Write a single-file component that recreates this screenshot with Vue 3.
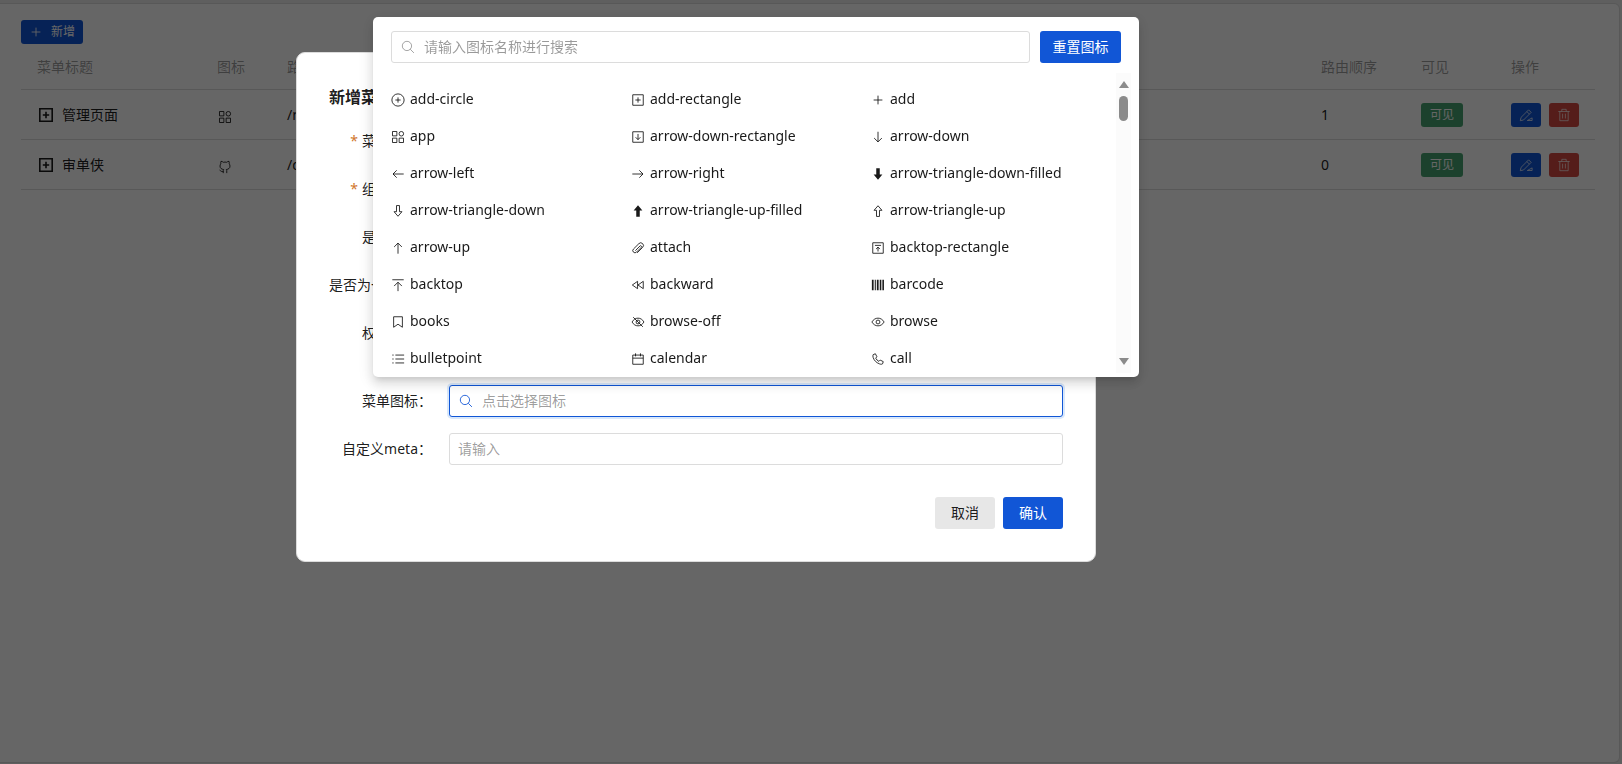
<script setup>
import { ref } from 'vue'

const keyword = ref('')
const menuIcon = ref('')
const meta = ref('')

const rows = [
  { title: '管理页面', icon: 'app', path: '/m', order: 1 },
  { title: '审单侠', icon: 'github', path: '/d', order: 0 },
]

const coveredFields = [
  { id: 'f-title', label: '菜单标题', required: true },
  { id: 'f-component', label: '组件名称', required: true },
  { id: 'f-visible', label: '是否可见' },
  { id: 'f-single', label: '是否为一级菜单' },
  { id: 'f-auth', label: '权限标识', tips: true },
]

const box = 'M2 2h12v12H2z'
const icons = {
  'add-circle': { d: 'M8 1a7 7 0 1 0 0 14A7 7 0 0 0 8 1zM8 5v6M5 8h6' },
  'add-rectangle': { d: box + 'M8 5v6M5 8h6' },
  add: { d: 'M8 3v10M3 8h10' },
  app: { d: 'M1.700 1.700h5v5h-5zM1.700 9.300h5v5h-5zM9.300 9.300h5v5h-5zM11.800 1.700a2.600 2.600 0 1 0 0 5.200a2.600 2.600 0 0 0 0-5.200z' },
  'arrow-down-rectangle': { d: box + 'M8 4.500v6.500M5.300 8.300L8 11l2.700-2.700' },
  'arrow-down': { d: 'M8 2v11.500M3.600 9.200L8 13.600l4.400-4.400' },
  'arrow-left': { d: 'M14.500 8H2.300M6.500 3.800L2.300 8l4.200 4.200' },
  'arrow-right': { d: 'M1.500 8h12.200M9.500 3.800L13.700 8l-4.200 4.200' },
  'arrow-triangle-down-filled': { d: 'M6 1.500h4v7h3L8 14.500L3 8.500h3z', fill: true },
  'arrow-triangle-down': { d: 'M6.300 1.800h3.400v7h2.800L8 14L3.500 8.800h2.800z' },
  'arrow-triangle-up-filled': { d: 'M6 14.500h4v-7h3L8 1.500L3 7.500h3z', fill: true },
  'arrow-triangle-up': { d: 'M6.300 14.200h3.400v-7h2.800L8 2L3.500 7.200h2.800z' },
  'arrow-up': { d: 'M8 14.500V2.500M3.600 6.800L8 2.400l4.400 4.400' },
  attach: { d: 'M5 11L10.300 5.700a1 1 0 0 1 1.500 1.500L6.300 12.700a2.400 2.400 0 0 1-3.500-3.500L9 3a3 3 0 0 1 4.300 4.300L7 13.600' },
  'backtop-rectangle': { d: box + 'M4.500 5h7M8 12V7M5.800 9.200L8 7l2.200 2.200' },
  backtop: { d: 'M1.500 2h13M8 15V5M3.600 9.200L8 4.800l4.400 4.400' },
  backward: { d: 'M7.500 3.800v8.400L1.500 8zM14 3.800v8.400L8 8z' },
  barcode: { d: 'M1 2h2v12h-2zM4.300 2h1.200v12h-1.200zM6.700 2h2v12h-2zM10 2h1.800v12h-1.800zM13 2h1.800v12h-1.800z', fill: true },
  books: { d: 'M3 2h10v12L8 10.500L3 14z' },
  'browse-off': { d: 'M1.200 8C3 5 5.300 3.600 8 3.600S13 5 14.800 8C13 11 10.700 12.400 8 12.400S3 11 1.200 8zM8 5.800a2.200 2.200 0 1 0 0 4.400a2.200 2.200 0 0 0 0-4.400M2.500 2.500l11 11' },
  browse: { d: 'M1 8C2.800 5 5.300 3.600 8 3.600S13.200 5 15 8C13.200 11 10.700 12.400 8 12.400S2.800 11 1 8zM8 5.800a2.200 2.200 0 1 0 0 4.400a2.200 2.200 0 0 0 0-4.400' },
  bulletpoint: { d: 'M5 3.500h10M5 8h10M5 12.500h10M1.500 3.500h1.500M1.500 8h1.500M1.500 12.500h1.500' },
  calendar: { d: 'M2 3.500h12v10.500H2zM2 7h12M5.200 1.500v3.500M10.800 1.500v3.500' },
  call: { d: 'M2.500 3L5 2L6.800 5.500L5.300 7C6 8.500 7.500 10 9 10.700L10.500 9.200L14 11L13.200 13.500C12.300 14.200 11 14.100 9.500 13.500C6 12.100 3.700 9.800 2.500 6.500C2 5 2 3.800 2.500 3z' },
  search: { d: 'M6.800 1.500a5.300 5.300 0 1 0 0 10.600a5.300 5.300 0 0 0 0-10.600zM10.600 10.600l4.200 4.200' },
  github: { d: 'M6 15v-2.900c0-.6.200-.9.500-1.200C4 10.500 2.300 9.500 2.300 6.900c0-1.100.4-1.900.9-2.500c-.2-1-.1-2 .2-2.900c1 0 2 .5 2.700 1.100a8 8 0 0 1 3.800 0c.7-.6 1.700-1.100 2.700-1.100c.3.900.4 1.900.2 2.900c.5.600.9 1.400.9 2.500c0 2.600-1.700 3.600-4.200 4c.3.300.5.600.5 1.200V15M6 13.200c-2 .5-2.600-.7-4.200-1.700' },
  expand: { d: 'M1.800 1.800h12.400v12.400H1.800zM8 4.800v6.400M4.800 8h6.400' },
  edit: { d: 'M1.500 14.500l.8-3.700L11 2.100l2.900 2.900l-8.700 8.700zM9 4.100l2.900 2.900M9.500 14.300h5.500v-3z' },
  delete: { d: 'M1.500 4h13M5.500 4V1.500h5V4M3.200 4v10.500h9.600V4M6.400 6.500v5.500M9.600 6.500v5.500' },
}

const iconNames = [
  'add-circle', 'add-rectangle', 'add',
  'app', 'arrow-down-rectangle', 'arrow-down',
  'arrow-left', 'arrow-right', 'arrow-triangle-down-filled',
  'arrow-triangle-down', 'arrow-triangle-up-filled', 'arrow-triangle-up',
  'arrow-up', 'attach', 'backtop-rectangle',
  'backtop', 'backward', 'barcode',
  'books', 'browse-off', 'browse',
  'bulletpoint', 'calendar', 'call',
]
</script>

<template>
  <div class="page">
    <main class="card">
      <button class="btn primary small create" type="button">
        <svg class="icon" viewBox="0 0 16 16"><path :d="icons.add.d" /></svg>
        <span>新增</span>
      </button>
      <table class="menu-table">
        <colgroup>
          <col class="c-title" /><col class="c-icon" /><col />
          <col class="c-order" /><col class="c-visible" /><col class="c-action" />
        </colgroup>
        <thead>
          <tr>
            <th>菜单标题</th><th>图标</th><th>路由</th><th>路由顺序</th><th>可见</th><th>操作</th>
          </tr>
        </thead>
        <tbody>
          <tr v-for="row in rows" :key="row.title">
            <td>
              <div class="tree-cell">
                <button class="expander" type="button" aria-label="expand">
                  <svg class="icon bold" viewBox="0 0 16 16"><path :d="icons.expand.d" /></svg>
                </button>
                <span>{{ row.title }}</span>
              </div>
            </td>
            <td class="icon-cell"><svg class="icon" viewBox="0 0 16 16"><path :d="icons[row.icon].d" /></svg></td>
            <td>{{ row.path }}</td>
            <td>{{ row.order }}</td>
            <td><span class="tag">可见</span></td>
            <td>
              <div class="actions">
                <button class="btn primary small square" type="button" aria-label="edit">
                  <svg class="icon" viewBox="0 0 16 16"><path :d="icons.edit.d" /></svg>
                </button>
                <button class="btn danger small square" type="button" aria-label="delete">
                  <svg class="icon" viewBox="0 0 16 16"><path :d="icons.delete.d" /></svg>
                </button>
              </div>
            </td>
          </tr>
        </tbody>
      </table>
    </main>

    <div class="mask">
      <section class="dialog" role="dialog" aria-labelledby="dialog-title">
        <h2 id="dialog-title">新增菜单</h2>
        <form class="form" @submit.prevent>
          <div v-for="f in coveredFields" :key="f.id" class="field" :class="{ tips: f.tips }">
            <label :for="f.id" :class="{ required: f.required }">{{ f.label }}：</label>
            <div class="input"><input :id="f.id" type="text" /></div>
          </div>
          <div class="field">
            <label for="f-icon">菜单图标：</label>
            <div class="input focused">
              <svg class="icon" viewBox="0 0 16 16"><path :d="icons.search.d" /></svg>
              <input id="f-icon" v-model="menuIcon" type="text" placeholder="点击选择图标" />
            </div>
          </div>
          <div class="field">
            <label for="f-meta">自定义meta：</label>
            <div class="input"><input id="f-meta" v-model="meta" type="text" placeholder="请输入" /></div>
          </div>
          <footer class="footer">
            <button class="btn default" type="button">取消</button>
            <button class="btn primary" type="submit">确认</button>
          </footer>
        </form>
      </section>

      <section class="popup">
        <div class="search-row">
          <div class="input">
            <svg class="icon" viewBox="0 0 16 16"><path :d="icons.search.d" /></svg>
            <input v-model="keyword" type="text" aria-label="请输入图标名称进行搜索" placeholder="请输入图标名称进行搜索" />
          </div>
          <button class="btn primary reset" type="button">重置图标</button>
        </div>
        <div class="picker">
          <ul class="icon-grid">
            <li v-for="name in iconNames" :key="name">
              <svg class="icon" :class="{ filled: icons[name].fill }" viewBox="0 0 16 16"><path :d="icons[name].d" /></svg>
              <span>{{ name }}</span>
            </li>
          </ul>
          <div class="scrollbar">
            <span class="arrow up"></span>
            <span class="thumb"></span>
            <span class="arrow down"></span>
          </div>
        </div>
      </section>
    </div>
  </div>
</template>

<style>
body {
  margin: 0;
  overflow: hidden;
}
</style>

<style scoped>
* {
  box-sizing: border-box;
}
.page {
  min-height: 100vh;
  display: flex;
  padding: 3px 2px 1px 0;
  background: #eee;
  color: rgba(0, 0, 0, 0.9);
  font: 14px/22px "Noto Sans", "Noto Sans CJK SC", sans-serif;
}
.card {
  flex: 1;
  padding: 16px 24px 24px 21px;
  background: #fff;
  border: 1px solid #dcdcdc;
  border-left: 0;
  border-radius: 0 6px 6px 0;
}
.icon {
  width: 14px;
  height: 14px;
  flex: none;
  display: block;
  fill: none;
  stroke: currentColor;
  stroke-width: 1;
}
.icon.bold {
  stroke-width: 1.6;
}
.icon.filled {
  fill: currentColor;
  stroke: none;
}
.btn {
  display: inline-flex;
  align-items: center;
  justify-content: center;
  height: 32px;
  padding: 0 16px;
  border: 0;
  border-radius: 3px;
  font: inherit;
  cursor: pointer;
}
.btn.primary {
  background: #1156d6;
  color: #fff;
}
.btn.danger {
  background: #d54941;
  color: #fff;
}
.btn.default {
  background: #e7e7e7;
  color: rgba(0, 0, 0, 0.9);
}
.btn.small {
  height: 24px;
  padding: 0 8px;
  font-size: 12px;
}
.btn.reset {
  min-width: 81px;
  padding: 0 12px;
}
.btn.create {
  display: flex;
  gap: 8px;
}
.btn.square {
  width: 30px;
  padding: 0;
}
.menu-table {
  width: 100%;
  table-layout: fixed;
  border-collapse: separate;
  border-spacing: 0;
}
.c-title { width: 180px; }
.c-icon { width: 70px; }
.c-order { width: 100px; }
.c-visible { width: 90px; }
.c-action { width: 100px; }
th,
td {
  height: 50px;
  padding: 0 16px;
  border-bottom: 1px solid #dcdcdc;
  text-align: left;
  font-weight: 400;
  white-space: nowrap;
}
th {
  height: 46px;
  color: rgba(0, 0, 0, 0.4);
}
.tree-cell {
  display: flex;
  align-items: center;
  gap: 8px;
  padding-left: 1px;
}
.expander {
  display: flex;
  padding: 0;
  border: 0;
  background: none;
  color: inherit;
}
.expander .icon,
.icon-cell .icon {
  width: 16px;
  height: 16px;
}
.icon-cell .icon {
  padding: 1px;
}
.icon-cell {
  padding-top: 4px;
}
.tag {
  display: inline-flex;
  align-items: center;
  height: 24px;
  padding: 0 9px;
  border-radius: 3px;
  background: #46a470;
  color: #fff;
  font-size: 12px;
  vertical-align: middle;
}
.actions {
  display: flex;
  gap: 8px;
}
.square .icon {
  stroke: rgba(255, 255, 255, 0.8);
}
.mask {
  position: fixed;
  inset: 0;
  background: rgba(0, 0, 0, 0.6);
}
.dialog {
  position: absolute;
  top: 52px;
  left: 296px;
  width: 800px;
  padding: 32px;
  border: 1px solid #dcdcdc;
  border-radius: 9px;
  background: #fff;
}
h2 {
  margin: 0 0 16px;
  font-size: 16px;
  line-height: 24px;
  font-weight: 700;
}
.form {
  display: grid;
  gap: 16px;
}
.field {
  display: grid;
  grid-template-columns: 103px 1fr;
  gap: 17px;
}
.field.tips {
  padding-bottom: 20px;
}
label {
  line-height: 32px;
  text-align: right;
  white-space: nowrap;
}
label.required::before {
  content: "*";
  margin-right: 4px;
  color: #d0762c;
}
.input {
  display: flex;
  align-items: center;
  gap: 8px;
  height: 32px;
  padding: 0 8px;
  border: 1px solid #dcdcdc;
  border-radius: 3px;
  background: #fff;
}
.input .icon {
  width: 16px;
  height: 16px;
  padding: 1px;
  color: rgba(0, 0, 0, 0.4);
}
.input input {
  flex: 1;
  min-width: 0;
  padding: 0;
  border: 0;
  outline: 0;
  background: none;
  font: inherit;
  color: inherit;
}
.input input::placeholder {
  color: rgba(0, 0, 0, 0.4);
  opacity: 1;
}
.input.focused {
  border-color: #1156d6;
  box-shadow: 0 0 0 2px #d9e8fb;
}
.input.focused .icon {
  color: #1156d6;
}
.footer {
  display: flex;
  justify-content: flex-end;
  gap: 8px;
  padding-top: 16px;
}
.popup {
  position: absolute;
  top: 17px;
  left: 373px;
  width: 766px;
  padding: 14px 8px 4px 18px;
  border-radius: 5px;
  background: #fff;
  box-shadow: 0 3px 14px 2px rgba(0, 0, 0, 0.1), 0 8px 10px 1px rgba(0, 0, 0, 0.06), 0 5px 5px -3px rgba(0, 0, 0, 0.1);
}
.search-row {
  display: flex;
  gap: 10px;
  padding: 0 10px 10px 0;
}
.search-row .input {
  flex: 1;
}
.picker {
  display: flex;
  height: 300px;
  overflow: hidden;
}
.icon-grid {
  flex: 1;
  display: grid;
  grid-template-columns: repeat(3, 240px);
  grid-auto-rows: 37px;
  margin: 0;
  padding: 7px 0;
  list-style: none;
}
.icon-grid li {
  display: flex;
  align-items: center;
  gap: 5px;
}
.icon-grid .icon {
  margin-top: 2px;
}
.scrollbar {
  display: flex;
  flex-direction: column;
  align-items: center;
  width: 15px;
  padding: 8px 0;
  background: #fbfbfb;
}
.arrow {
  border: 5px solid transparent;
}
.arrow.up {
  border-top: 0;
  border-bottom: 7px solid #8b8b8b;
}
.arrow.down {
  margin-top: auto;
  border-bottom: 0;
  border-top: 7px solid #8b8b8b;
}
.thumb {
  width: 9px;
  height: 25px;
  margin-top: 8px;
  border-radius: 5px;
  background: #8b8b8b;
}
</style>
